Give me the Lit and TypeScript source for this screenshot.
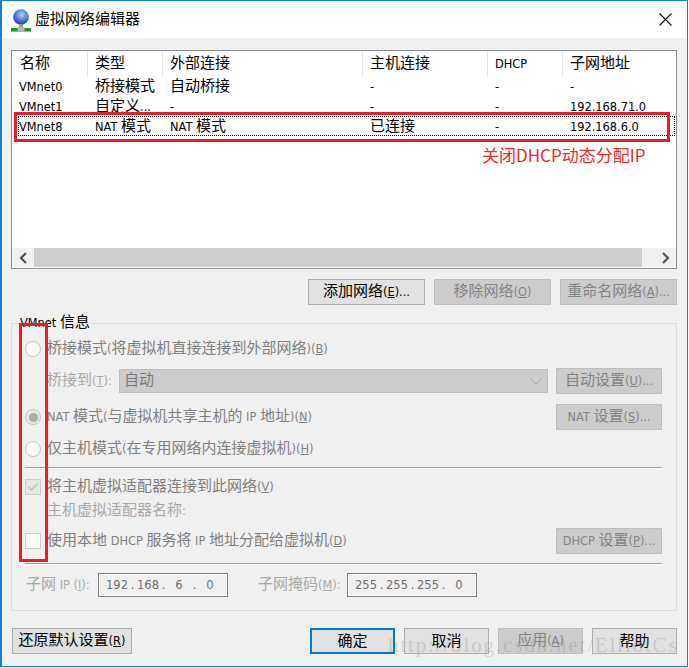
import { LitElement, html, css, TemplateResult } from "lit";
import { customElement } from "lit/decorators.js";

/* Splits text into CJK and latin runs; latin runs get a smaller face, `_X` marks a mnemonic. */
function t(text: string): TemplateResult {
  const out: TemplateResult[] = [];
  for (const part of text.split(/([\x20-\x7e]+)/)) {
    if (!part) continue;
    if (/^[\x20-\x7e]+$/.test(part)) {
      const m = part.split(/_(.)/);
      out.push(html`<span class="l">${m.map((p, i) => (i % 2 ? html`<u>${p}</u>` : p))}</span>`);
    } else {
      out.push(html`${part}`);
    }
  }
  return html`<span class="tx">${out}</span>`;
}

const CHEV_L = html`<svg width="9" height="12" viewBox="0 0 9 12"><path d="M7 1 L2 6 L7 11" fill="none" stroke="#505050" stroke-width="2.2"/></svg>`;
const CHEV_R = html`<svg width="9" height="12" viewBox="0 0 9 12"><path d="M2 1 L7 6 L2 11" fill="none" stroke="#505050" stroke-width="2.2"/></svg>`;

@customElement("app-root")
export class AppRoot extends LitElement {
  static styles = css`
    :host {
      display: block;
      position: relative;
      width: 689px;
      height: 668px;
      background: #fff;
      font-family: "Noto Sans CJK SC", sans-serif;
      font-size: 15px;
      color: #000;
      overflow: hidden;
    }
    .l { font-family: "DejaVu Sans", sans-serif; font-size: 11.4px; white-space: pre; }
    .tx { white-space: pre; }
    .btn .tx { padding-bottom: 3px; }
    .line > .tx, .lab .tx, .cap .tx, .cap2 .tx, .select .tx { padding-bottom: 5px; }
    u { text-underline-offset: 1px; }
    .win {
      box-sizing: border-box;
      width: 688px;
      height: 667px;
      border: 1px solid #0f80d8;
      border-left-width: 2px;
      background: #f0f0f0;
      display: flex;
      flex-direction: column;
    }
    .title {
      height: 37px;
      flex: none;
      background: #fff;
      display: flex;
      align-items: center;
      padding-left: 8px;
      box-sizing: border-box;
    }
    .title .glob { margin-right: 2px; }
    .title .name { line-height: 32px; height: 36px; }
    .title .close { margin-left: auto; margin-right: 15px; display: block; }
    .main {
      flex: 1;
      padding: 12px 9px 0;
      display: flex;
      flex-direction: column;
    }
    .list {
      box-sizing: border-box;
      width: 666px;
      height: 219px;
      flex: none;
      border: 1px solid #8b8e96;
      background: #fff;
      display: flex;
      flex-direction: column;
    }
    .cols {
      display: grid;
      grid-template-columns: 76px 75px 200px 125px 75px 1fr;
      white-space: nowrap;
    }
    .cols > div { padding-left: 7px; }
    .head { height: 25px; padding-top: 1px; box-sizing: border-box; }
    .head > div {
      border-right: 1px solid #e5e5e5;
      line-height: 20px;
      height: 24px;
    }
    .head > div:first-child { padding-left: 8px; }
    .head > div:last-child { border-right: 0; }
    .row { height: 20px; line-height: 18px; position: relative; }
    .row.focus::after {
      content: "";
      position: absolute;
      left: 6px;
      right: 1px;
      top: 0;
      bottom: 0;
      border: 1px dotted #000;
    }
    .grow { flex: 1; }
    .scroll {
      height: 19px;
      margin-bottom: 1px;
      flex: none;
      display: flex;
      align-items: stretch;
      background: #f0f0f0;
    }
    .scroll .arrow {
      width: 22px;
      display: flex;
      align-items: center;
      justify-content: center;
    }
    .scroll .arrow.r { width: 34px; padding-right: 6px; box-sizing: border-box; justify-content: flex-end; }
    .scroll .thumb { flex: 1; background: #cdcdcd; }
    .btn {
      box-sizing: border-box;
      height: 26px;
      background: #e1e1e1;
      border: 1px solid #adadad;
      display: flex;
      align-items: center;
      justify-content: center;
      white-space: nowrap;
      line-height: 22px;
      flex: none;
    }
    .btn.off { background: #cccccc; border-color: #bfbfbf; color: #838383; }
    .btn.def { border: 2px solid #0078d7; }
    .w117 { width: 117px; }
    .w106 { width: 106px; }
    .w85 { width: 85px; }
    .w120 { width: 120px; }
    .actions {
      display: flex;
      justify-content: flex-end;
      gap: 9px;
      margin: 10px 1px 0 0;
      flex: none;
    }
    .group {
      box-sizing: border-box;
      width: 666px;
      height: 288px;
      margin-top: 18px;
      border: 1px solid #dcdcdc;
      padding: 12px 14px 0 13px;
      position: relative;
      flex: none;
    }
    .legend {
      position: absolute;
      left: 8px;
      top: -12px;
      background: #f0f0f0;
      line-height: 18px;
      padding-right: 2px;
      white-space: nowrap;
    }
    .line {
      display: flex;
      align-items: center;
      height: 26px;
      white-space: nowrap;
      color: #7f7f7f;
    }
    .mark { width: 16px; height: 16px; flex: none; margin-right: 6px; box-sizing: border-box; }
    .radio {
      border-radius: 50%;
      border: 1px solid #c4c4c4;
      background: #fafafa;
      display: flex;
      align-items: center;
      justify-content: center;
    }
    .radio.on { background: #e6e6e6; }
    .radio.on::after {
      content: "";
      width: 9px;
      height: 9px;
      border-radius: 50%;
      background: #adadad;
    }
    .check {
      border: 1px solid #cccccc;
      background: #fafafa;
      display: flex;
      align-items: center;
      justify-content: center;
    }
    .check.on { background: #e6e6e6; }
    .pad { width: 22px; flex: none; }
    .faint { color: #a8a8a8; }
    .select {
      box-sizing: border-box;
      width: 429px;
      height: 24px;
      margin: 0 8px 0 0;
      background: #cccccc;
      border: 1px solid #bfbfbf;
      display: flex;
      align-items: center;
      padding: 0 4px;
      color: #7a7a7a;
      flex: none;
    }
    .select svg { margin-left: auto; margin-right: 1px; }
    .push { margin-left: auto; }
    .lab { width: 72px; flex: none; display: flex; align-items: center; }
    .rule {
      height: 1px;
      background: #a3a3a3;
      border-bottom: 1px solid #fff;
      flex: none;
    }
    .m6 { margin-top: 6px; }
    .m10 { margin-top: 10px; }
    .m6b { margin-top: 5px; }
    .h24 { height: 24px; }
    .r1 { margin-top: 5px; }
    .r2 { margin-top: 9px; }
    .s1 { margin-top: 8px; }
    .sub { padding-left: 1px; color: #a8a8a8; }
    .sub .cap { width: 72px; flex: none; display: flex; align-items: center; }
    .sub .cap2 { width: 89px; margin-left: 30px; flex: none; display: flex; align-items: center; }
    .ip {
      box-sizing: border-box;
      width: 130px;
      height: 24px;
      border: 1px solid #7d7d7d;
      box-shadow: inset 0 0 0 1px #fff;
      display: flex;
      align-items: center;
      padding-left: 7px;
      color: #6e6e6e;
      font-family: "DejaVu Sans", sans-serif;
      font-size: 11.5px;
      flex: none;
    }
    .ip span { width: 22px; text-align: center; }
    .ip i { width: 9px; text-align: center; font-style: normal; }
    .foot {
      display: flex;
      justify-content: space-between;
      align-items: center;
      margin: 17px 1px 0 1px;
      flex: none;
    }
    .foot .right { display: flex; gap: 9px; }
    .note {
      position: absolute;
      box-sizing: border-box;
      border: 3px solid #ed1c24;
      pointer-events: none;
    }
    .n1 { left: 14px; top: 112px; width: 656px; height: 30px; }
    .n2 { left: 19px; top: 323px; width: 29px; height: 239px; }
    .caption {
      position: absolute;
      left: 482px;
      top: 144px;
      line-height: 22px;
      font-size: 17px;
      color: #f0282a;
      white-space: nowrap;
    }
    .mark-text {
      position: absolute;
      left: 388px;
      top: 633px;
      font-family: "Liberation Serif", serif;
      font-size: 21px;
      letter-spacing: 1.85px;
      line-height: 24px;
      color: rgba(120, 120, 120, 0.25);
      white-space: nowrap;
      pointer-events: none;
    }
  `;

  private ip(a: string, b: string, c: string, d: string) {
    return html`<div class="ip"><span>${a}</span><i>.</i><span>${b}</span><i>.</i><span>${c}</span><i>.</i><span>${d}</span></div>`;
  }

  private row(cells: string[], focus = false) {
    return html`<div class="cols row ${focus ? "focus" : ""}">${cells.map((c) => html`<div>${t(c)}</div>`)}</div>`;
  }

  render() {
    return html`
      <div class="win">
        <div class="title">
          <svg class="glob" width="23" height="24" viewBox="0 0 23 24">
            <defs>
              <radialGradient id="g" cx="0.55" cy="0.35" r="0.7">
                <stop offset="0" stop-color="#b5d3f5" />
                <stop offset="0.55" stop-color="#4a7fd0" />
                <stop offset="1" stop-color="#27308f" />
              </radialGradient>
            </defs>
            <circle cx="11" cy="9" r="7.8" fill="url(#g)" />
            <rect x="9" y="16" width="4" height="4" fill="#9a9a9a" />
            <rect x="1" y="20" width="20" height="3.6" fill="#10a020" />
            <rect x="7.5" y="19" width="7" height="4.6" fill="#b8b8b8" />
          </svg>
          <span class="name">虚拟网络编辑器</span>
          <svg class="close" width="13" height="13" viewBox="0 0 13 13">
            <path d="M0.5 0.5 L12.5 12.5 M12.5 0.5 L0.5 12.5" stroke="#111" stroke-width="1.1" fill="none" />
          </svg>
        </div>
        <div class="main">
          <div class="list">
            <div class="cols head">
              <div>名称</div><div>类型</div><div>外部连接</div><div>主机连接</div><div>${t("DHCP")}</div><div>子网地址</div>
            </div>
            ${this.row(["VMnet0", "桥接模式", "自动桥接", "-", "-", "-"])}
            ${this.row(["VMnet1", "自定义...", "-", "-", "-", "192.168.71.0"])}
            ${this.row(["VMnet8", "NAT 模式", "NAT 模式", "已连接", "-", "192.168.6.0"], true)}
            <div class="grow"></div>
            <div class="scroll">
              <div class="arrow">${CHEV_L}</div>
              <div class="thumb"></div>
              <div class="arrow r">${CHEV_R}</div>
            </div>
          </div>
          <div class="actions">
            <div class="btn w117">${t("添加网络(_E)...")}</div>
            <div class="btn w117 off">${t("移除网络(_O)")}</div>
            <div class="btn w117 off">${t("重命名网络(_A)...")}</div>
          </div>
          <div class="group">
            <div class="legend">${t("VMnet 信息")}</div>
            <div class="line"><div class="mark radio"></div>${t("桥接模式(将虚拟机直接连接到外部网络)(_B)")}</div>
            <div class="line m6 faint">
              <div class="pad"></div>
              <div class="lab">${t("桥接到(_T):")}</div>
              <div class="select">${t("自动")}
                <svg width="12" height="7" viewBox="0 0 12 7"><path d="M1 1 L6 6 L11 1" fill="none" stroke="#a8a8a8" /></svg>
              </div>
              <div class="btn w106 off">${t("自动设置(_U)...")}</div>
            </div>
            <div class="line m10"><div class="mark radio on"></div>${t("NAT 模式(与虚拟机共享主机的 IP 地址)(_N)")}
              <div class="btn w106 off push">${t("NAT 设置(_S)...")}</div>
            </div>
            <div class="line m6"><div class="mark radio"></div>${t("仅主机模式(在专用网络内连接虚拟机)(_H)")}</div>
            <div class="rule r1"></div>
            <div class="line h24 m6"><div class="mark check on">
              <svg width="12" height="10" viewBox="0 0 12 10"><path d="M1.5 5 L4.5 8 L10.5 1.5" fill="none" stroke="#c2c2c2" stroke-width="1.6" /></svg>
            </div>${t("将主机虚拟适配器连接到此网络(_V)")}</div>
            <div class="line h24 faint"><div class="pad"></div>${t("主机虚拟适配器名称:")}</div>
            <div class="line m6b"><div class="mark check"></div>${t("使用本地 DHCP 服务将 IP 地址分配给虚拟机(_D)")}
              <div class="btn w106 off push">${t("DHCP 设置(_P)...")}</div>
            </div>
            <div class="rule r2"></div>
            <div class="line h24 sub s1">
              <div class="cap">${t("子网 IP (_I):")}</div>
              ${this.ip("192", "168", "6", "0")}
              <div class="cap2">${t("子网掩码(_M):")}</div>
              ${this.ip("255", "255", "255", "0")}
            </div>
          </div>
          <div class="foot">
            <div class="btn w120">${t("还原默认设置(_R)")}</div>
            <div class="right">
              <div class="btn w85 def">${t("确定")}</div>
              <div class="btn w85">${t("取消")}</div>
              <div class="btn w85 off">${t("应用(_A)")}</div>
              <div class="btn w85">${t("帮助")}</div>
            </div>
          </div>
        </div>
      </div>
      <div class="note n1"></div>
      <div class="note n2"></div>
      <div class="caption">关闭DHCP动态分配IP</div>
      <div class="mark-text">http://blog.csdn.net/ElliotCs</div>
    `;
  }
}
